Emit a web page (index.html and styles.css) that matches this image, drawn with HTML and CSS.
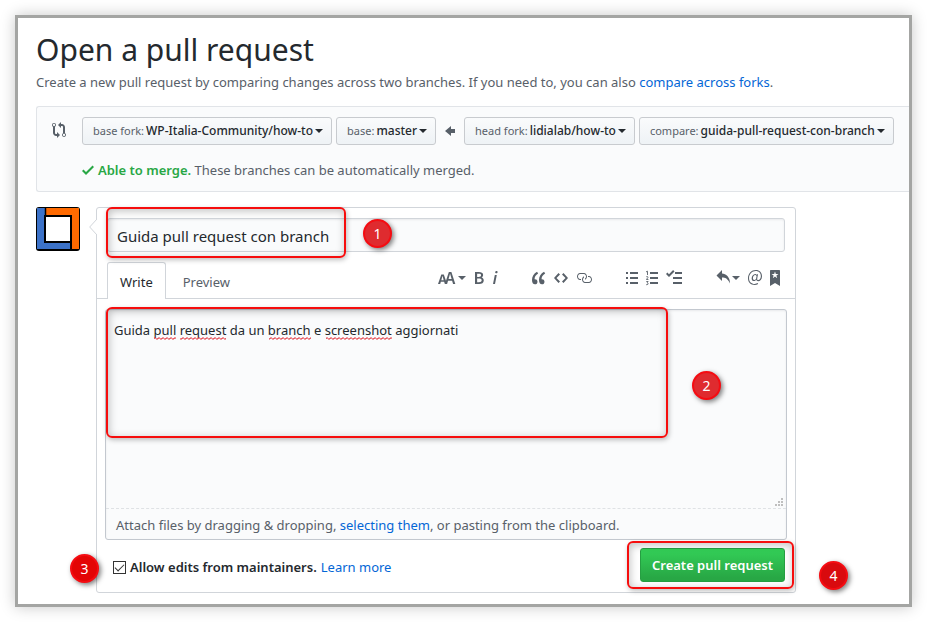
FILE: index.html
```html
<!DOCTYPE html>
<html lang="en">
<head>
<meta charset="utf-8">
<meta name="viewport" content="width=device-width, initial-scale=1">
<title>Open a pull request</title>
<link rel="stylesheet" href="styles.css">
</head>
<body>
<main class="frame">
  <header class="subhead">
    <h1>Open a pull request</h1>
    <p>Create a new pull request by comparing changes across two branches. If you need to, you can also <a href="#forks">compare across forks</a>.</p>
  </header>

  <section class="range" aria-label="Branches">
    <svg class="range-icon" width="14" height="16" viewBox="0 0 14 16" aria-hidden="true"><path d="M5 12H4c-.27-.02-.48-.11-.69-.31-.21-.2-.3-.42-.31-.69V4.72A1.993 1.993 0 0 0 2 1a1.993 1.993 0 0 0-1 3.72V11c.03.78.34 1.47.94 2.06.6.59 1.28.91 2.06.94h1v2l3-3-3-3v2zM2 1.8c.66 0 1.2.55 1.2 1.2 0 .65-.55 1.2-1.2 1.2C1.35 4.2.8 3.65.8 3c0-.65.55-1.2 1.2-1.2zm11 9.48V5c-.03-.78-.34-1.47-.94-2.06-.6-.59-1.28-.91-2.06-.94H9V0L6 3l3 3V4h1c.27.02.48.11.69.31.21.2.3.42.31.69v6.28A1.993 1.993 0 0 0 12 15a1.993 1.993 0 0 0 1-3.72zm-1 2.92c-.66 0-1.2-.55-1.2-1.2 0-.65.55-1.2 1.2-1.2.65 0 1.2.55 1.2 1.2 0 .65-.55 1.2-1.2 1.2z"/></svg>
    <div class="range-body">
      <div class="pickers">
        <button type="button" class="picker"><span>base fork:</span> <b>WP-Italia-Community/how-to</b><i class="caret"></i></button>
        <button type="button" class="picker"><span>base:</span> <b>master</b><i class="caret"></i></button>
        <svg class="arrow" width="10" height="16" viewBox="0 0 10 16" aria-hidden="true"><path d="M6 3L0 8l6 5v-3h4V6H6z"/></svg>
        <button type="button" class="picker"><span>head fork:</span> <b>lidialab/how-to</b><i class="caret"></i></button>
        <button type="button" class="picker"><span>compare:</span> <b>guida-pull-request-con-branch</b><i class="caret"></i></button>
      </div>
      <p class="merge"><svg width="12" height="16" viewBox="0 0 12 16" aria-hidden="true"><path d="M12 5l-8 8-4-4 1.5-1.5L4 10l6.5-6.5z"/></svg><span><strong>Able to merge.</strong> These branches can be automatically merged.</span></p>
    </div>
  </section>

  <form class="discussion">
    <svg class="avatar" width="44" height="44" viewBox="0 0 44 44" aria-hidden="true">
      <rect width="44" height="44" rx="3" fill="#000"/>
      <path d="M1 1h8v35h25v6H1z" fill="#3c72c8"/>
      <path d="M10 1h33v41h-7V8H10z" fill="#ff6a00"/>
      <path d="M8 8h28v28H8z" fill="#000"/>
      <path d="M10 10h24v24H10z" fill="#fff"/>
      <path d="M35 35v8M9.500 1v8" stroke="#000" stroke-width="1.500"/>
    </svg>
    <div class="composer">
      <svg class="pointer" width="8" height="16" viewBox="0 0 8 16" aria-hidden="true"><path d="M8 0L.7 8 8 16" fill="#fff" stroke="#d1d5da"/></svg>
      <div class="title-row">
        <input type="text" class="title" aria-label="Title" value="Guida pull request con branch">
        <span class="mark mark-title"></span>
        <span class="badge badge-one">1</span>
      </div>
      <div class="tabs">
        <button type="button" class="tab active">Write</button>
        <button type="button" class="tab">Preview</button>
        <div class="toolbar">
          <div class="group">
            <button type="button" class="tool" aria-label="Text size"><svg width="18" height="16" viewBox="0 0 18 16"><path d="M13.62 9.08L12.1 3.66h-.06l-1.5 5.42h3.08zM5.7 10.13S4.68 6.52 4.53 6.02h-.08l-1.13 4.11H5.7zM17.31 14h-2.25l-.95-3.25h-4.07L9.09 14H6.84l-.69-2.33H2.87L2.17 14H0l3.3-9.59h2.5l2.17 6.34L10.86 2h2.52l3.94 12h-.01z"/></svg><i class="caret"></i></button>
            <button type="button" class="tool" aria-label="Bold"><svg width="10" height="16" viewBox="0 0 10 16"><path d="M1 2h3.83c2.48 0 4.3.75 4.3 2.95 0 1.14-.63 2.23-1.67 2.61v.06c1.33.3 2.3 1.23 2.3 2.86 0 2.39-1.97 3.52-4.61 3.52H1V2zm3.66 4.95c1.67 0 2.38-.66 2.38-1.69 0-1.17-.78-1.61-2.34-1.61H3.13v3.3h1.53zm.27 5.39c1.77 0 2.75-.64 2.75-1.98 0-1.27-.95-1.81-2.75-1.81h-1.8v3.8h1.8v-.01z"/></svg></button>
            <button type="button" class="tool" aria-label="Italic"><svg width="6" height="16" viewBox="0 0 6 16"><path d="M2.81 5h1.98L3 14H1l1.81-9zm.36-2.7c0-.7.58-1.3 1.33-1.3.56 0 1.13.38 1.13 1.03 0 .75-.59 1.3-1.33 1.3-.58 0-1.13-.38-1.13-1.03z"/></svg></button>
          </div>
          <div class="group">
            <button type="button" class="tool" aria-label="Quote"><svg width="14" height="16" viewBox="0 0 14 16"><path d="M6.16 3.5C3.73 5.06 2.55 6.67 2.55 9.36c.16-.05.3-.05.44-.05 1.27 0 2.5.86 2.5 2.41 0 1.61-1.03 2.61-2.5 2.61-1.9 0-2.99-1.52-2.99-4.25 0-3.8 1.75-6.53 5.02-8.42L6.16 3.5zm7 0c-2.43 1.56-3.61 3.17-3.61 5.86.16-.05.3-.05.44-.05 1.27 0 2.5.86 2.5 2.41 0 1.61-1.03 2.61-2.5 2.61-1.89 0-2.98-1.52-2.98-4.25 0-3.8 1.75-6.53 5.02-8.42l1.14 1.84h-.01z"/></svg></button>
            <button type="button" class="tool" aria-label="Code"><svg width="14" height="16" viewBox="0 0 14 16"><path d="M9.5 3L8 4.5 11.5 8 8 11.5 9.5 13 14 8 9.5 3zm-5 0L0 8l4.5 5L6 11.5 2.5 8 6 4.5 4.5 3z"/></svg></button>
            <button type="button" class="tool" aria-label="Link"><svg width="16" height="16" viewBox="0 0 16 16"><path d="M4 9h1v1H4c-1.5 0-3-1.69-3-3.5S2.55 3 4 3h4c1.45 0 3 1.69 3 3.5 0 1.41-.91 2.72-2 3.25V8.59c.58-.45 1-1.27 1-2.09C10 5.22 8.98 4 8 4H4c-.98 0-2 1.22-2 2.5S3 9 4 9zm9-3h-1v1h1c1 0 2 1.22 2 2.5S13.98 12 13 12H9c-.98 0-2-1.22-2-2.5 0-.83.42-1.64 1-2.09V6.25c-1.09.53-2 1.84-2 3.25C6 11.31 7.55 13 9 13h4c1.45 0 3-1.69 3-3.5S14.5 6 13 6z"/></svg></button>
          </div>
          <div class="group">
            <button type="button" class="tool" aria-label="Bulleted list"><svg width="12" height="16" viewBox="0 0 12 16"><path d="M0 2h2v2H0zM4 2h8v2H4zM0 7h2v2H0zM4 7h8v2H4zM0 12h2v2H0zM4 12h8v2H4z"/></svg></button>
            <button type="button" class="tool" aria-label="Numbered list"><svg width="12" height="16" viewBox="0 0 12 16"><path d="M4 2h8v2H4zM4 7h8v2H4zM4 12h8v2H4z"/><path d="M0 1.900L1.500 1.200V5M.2 6.900c1-.9 2.200-.2 1.600.8L.4 9.500h2M.3 11.500h1.800L1.200 12.700c1.300.2 1.200 2-.2 2H.2" fill="none" stroke="#586069" stroke-width=".9"/></svg></button>
            <button type="button" class="tool" aria-label="Task list"><svg width="16" height="16" viewBox="0 0 16 16"><path d="M7 7h9v2H7zM9 2h7v2H9zM7 12h9v2H7zM0 3.91l1.41-1.3L3 4.2 7.09 0 8.5 1.41 3 6.91z"/></svg></button>
          </div>
          <div class="group">
            <button type="button" class="tool" aria-label="Saved replies"><svg width="14" height="16" viewBox="0 0 14 16"><path d="M6 3.5c3.92.44 8 3.125 8 10-2.312-5.062-4.75-6-8-6V11L.5 5.5 6 0v3.5z"/></svg><i class="caret"></i></button>
            <button type="button" class="tool" aria-label="Mention"><svg width="14" height="16" viewBox="0 0 14 16"><path d="M6.58 15c1.25 0 2.52-.31 3.56-.94l-.42-.94c-.84.52-1.89.83-3.03.83-3.23 0-5.64-2.08-5.64-5.72 0-4.37 3.23-7.18 6.58-7.18 3.45 0 5.22 2.19 5.22 5.2 0 2.39-1.34 3.86-2.5 3.86-1.05 0-1.36-.73-1.05-2.19l.73-3.75H8.98l-.11.72c-.41-.63-.94-.83-1.56-.83-2.19 0-3.66 2.39-3.66 4.38 0 1.67.94 2.61 2.3 2.61.84 0 1.67-.53 2.3-1.25.11.94.94 1.45 1.98 1.45 1.67 0 3.77-1.67 3.77-5C14 2.61 11.59 0 7.83 0 3.66 0 0 3.33 0 8.33 0 12.71 2.92 15 6.58 15zm-.31-5c-.73 0-1.36-.52-1.36-1.67 0-1.45.94-3.22 2.41-3.22.52 0 .84.2 1.25.83l-.52 3.02c-.63.73-1.25 1.05-1.78 1.05V10z"/></svg></button>
            <button type="button" class="tool" aria-label="Reference"><svg width="10" height="16" viewBox="0 0 10 16"><path d="M9 0H1C.27 0 0 .27 0 1v15l5-3.09L10 16V1c0-.73-.27-1-1-1zm-.78 4.25L6.36 5.61l.72 2.16c.06.22-.02.28-.2.17L5 6.6 3.12 7.94c-.19.11-.25.05-.2-.17l.72-2.16-1.86-1.36c-.17-.16-.14-.23.09-.23l2.3-.03.7-2.16h.25l.7 2.16 2.3.03c.23 0 .27.08.09.23h.01z"/></svg></button>
          </div>
        </div>
      </div>
      <div class="editor">
        <textarea class="body" aria-label="Description" spellcheck="false">Guida pull request da un branch e screenshot aggiornati</textarea>
        <svg class="squiggles" width="360" height="4" aria-hidden="true">
          <defs><pattern id="wave" width="4" height="4" patternUnits="userSpaceOnUse"><path d="M-1 4L1 1.500 3 3.500 5 1" fill="none" stroke="#e0202a"/></pattern></defs>
          <path fill="url(#wave)" d="M40 0h22v4H40zM66 0h46v4H66zM155 0h42v4h-42zM212 0h66v4h-66z"/>
        </svg>
        <svg class="grip" width="8" height="8" viewBox="0 0 8 8" aria-hidden="true"><path d="M6 0h2v2H6zM3 3h2v2H3zM6 3h2v2H6zM0 6h2v2H0zM3 6h2v2H3zM6 6h2v2H6z" fill="#bfbfbf"/></svg>
        <p class="attach">Attach files by dragging &amp; dropping, <a href="#files">selecting them</a>, or pasting from the clipboard.</p>
        <span class="mark mark-body"></span>
        <span class="badge badge-two">2</span>
      </div>
      <div class="actions">
        <div class="allow">
          <input type="checkbox" id="allow" checked>
          <label for="allow">Allow edits from maintainers.</label>
          <a href="#learn">Learn more</a>
          <span class="badge badge-three">3</span>
        </div>
        <div class="submit-wrap">
          <button type="submit" class="submit">Create pull request</button>
          <span class="mark mark-submit"></span>
          <span class="badge badge-four">4</span>
        </div>
      </div>
    </div>
  </form>
</main>
</body>
</html>
```
FILE: styles.css
```css
* { box-sizing: border-box; }

body {
  margin: 0;
  padding: 15px;
  background: #fff;
  color: #24292e;
  font: 13px/20px "Noto Sans", "Open Sans", sans-serif;
}

button, input, textarea { font: inherit; color: inherit; }
h1, p { margin: 0; }
a { color: #0366d6; text-decoration: none; }
svg { display: block; flex: none; fill: #586069; }

.frame {
  border: 3px solid #a4a5a3;
  padding: 10px 0 11px 18px;
  background: #fff;
  box-shadow: 0 0 14px rgba(0, 0, 0, .22);
}

.subhead { margin-bottom: 14px; color: #586069; }
.subhead h1 { font-size: 30px; line-height: 44px; font-weight: 400; color: #24292e; }

.range {
  display: flex;
  gap: 16px;
  padding: 10px 0 11px 15px;
  border: 1px solid #e1e4e8;
  border-right: 0;
  border-radius: 3px 0 0 3px;
  background: #fafbfc;
}
.range-icon { margin-top: 5px; }
.range-body { flex: 1; min-width: 0; }
.pickers { display: flex; flex-wrap: wrap; gap: 4px; align-items: center; }
.arrow { margin: 0 5px; }

.picker {
  display: flex;
  align-items: center;
  gap: 2px;
  height: 28px;
  padding: 0 8px 0 10px;
  border: 1px solid #c8cbcf;
  border-radius: 3px;
  background: linear-gradient(#fafbfc, #eff3f6 90%);
  font-size: 12px;
  white-space: nowrap;
}
.picker span { font-size: 11px; color: #586069; }
.picker b { font-weight: 500; }
.caret {
  border: 4px solid transparent;
  border-top-color: currentColor;
  border-bottom: 0;
}

.merge { display: flex; align-items: center; gap: 4px; margin-top: 15px; color: #586069; }
.merge svg { fill: #28a745; }
.merge strong { color: #28a745; font-weight: 600; }

.discussion { display: flex; gap: 16px; margin-top: 15px; }
.composer {
  position: relative;
  flex: 1;
  max-width: 700px;
  border: 1px solid #d1d5da;
  border-radius: 3px;
}
.pointer { position: absolute; left: -8px; top: 11px; }

.title-row { position: relative; padding: 10px; }
.title {
  display: block;
  width: 100%;
  height: 34px;
  padding: 2px 9px 0;
  border: 1px solid #d1d5da;
  border-radius: 3px;
  background: #fafbfc;
  box-shadow: inset 0 1px 2px rgba(27, 31, 35, .075);
  font-size: 15px;
}

.tabs {
  display: flex;
  gap: 4px;
  padding: 0 15px 0 10px;
  border-bottom: 1px solid #d1d5da;
}
.tab {
  height: 36px;
  padding: 2px 12px 0;
  border: 1px solid transparent;
  border-bottom: 0;
  border-radius: 3px 3px 0 0;
  background: none;
  color: #586069;
}
.tab.active {
  height: 37px;
  margin-bottom: -1px;
  border-color: #d1d5da;
  background: #fff;
  color: #24292e;
}
.toolbar { display: flex; gap: 34px; margin-left: auto; align-items: center; height: 32px; }
.group { display: flex; gap: 8px; }
.tool {
  display: flex;
  align-items: center;
  gap: 2px;
  padding: 0;
  border: 0;
  background: none;
  color: #586069;
}

.editor {
  position: relative;
  margin: 10px 8px 0;
  border: 1px solid #c3c8cf;
  border-radius: 3px;
  background: #fafbfc;
  box-shadow: inset 0 1px 2px rgba(27, 31, 35, .075);
}
.body {
  display: block;
  width: 100%;
  height: 199px;
  padding: 10px 8px;
  border: 0;
  border-bottom: 1px dashed #dfe2e5;
  background: none;
  resize: none;
}
.squiggles { position: absolute; left: 8px; top: 26px; }
.grip { position: absolute; right: 3px; top: 188px; }
.attach { padding: 6px 10px 4px; color: #586069; }

.actions {
  display: flex;
  justify-content: space-between;
  align-items: center;
  padding: 8px 10px 10px 16px;
}
.allow { position: relative; display: flex; align-items: center; gap: 4px; padding-top: 4px; }
.allow label { font-weight: 600; }
.allow input {
  appearance: none;
  width: 13px;
  height: 13px;
  margin: 0;
  border: 1px solid #333;
  background: #fff;
}
.allow input:checked::before {
  content: "";
  display: block;
  width: 8px;
  height: 4px;
  margin: 2px 0 0 1px;
  border: solid #333;
  border-width: 0 0 1px 1px;
  transform: rotate(-45deg);
}
.submit-wrap { position: relative; }
.submit {
  display: block;
  height: 34px;
  padding: 0 11px;
  border: 1px solid #269f42;
  border-radius: 3px;
  background: linear-gradient(#34d058, #28a745 90%);
  color: #fff;
  font-weight: 600;
}

/* Numbered tutorial callouts drawn over the form */
.mark {
  position: absolute;
  border: 2px solid #f60d0d;
  border-radius: 6px;
  pointer-events: none;
  box-shadow: 1px 2px 5px rgba(0, 0, 0, .25), inset 1px 2px 8px rgba(0, 0, 0, .25);
}
.mark-title { left: 9px; top: -1px; width: 240px; height: 51px; }
.mark-body { left: 0; top: -3px; width: 562px; height: 131px; }
.mark-submit { inset: -7px -9px -7px -13px; }

.badge {
  position: absolute;
  width: 29px;
  height: 29px;
  border: 2px solid #f50c12;
  border-radius: 50%;
  background: #df2b2f;
  color: #fff;
  font-size: 14px;
  line-height: 25px;
  text-align: center;
  box-shadow: 2px 2px 5px rgba(0, 0, 0, .5);
}
.badge-one { left: 266px; top: 11px; }
.badge-two { left: 586px; top: 61px; }
.badge-three { left: -43px; top: 1px; background: #e30505; }
.badge-four { right: -63px; top: 13px; background: #d90a0e; }
```
